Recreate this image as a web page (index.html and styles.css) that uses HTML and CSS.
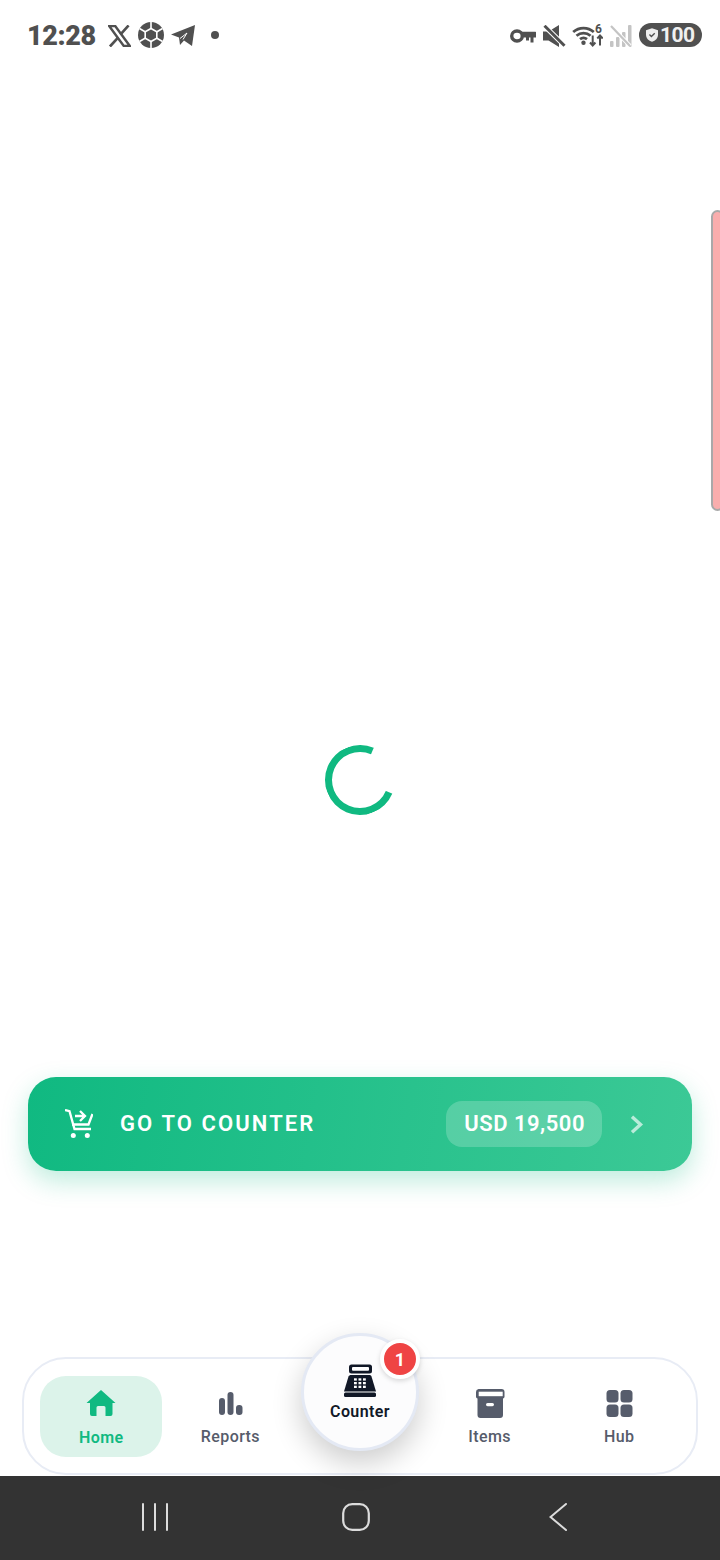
FILE: index.html
```html
<!DOCTYPE html>
<html lang="en">
<head>
<meta charset="utf-8">
<title>Home</title>
<link rel="stylesheet" href="styles.css">
</head>
<body>
<div class="app">
  <header class="status">
    <div class="status-left">
      <span class="time">12:28</span>
      <svg class="ic-x" viewBox="0 0 24 23"><path d="M1.200 1h6.300l15.300 21h-6.300z" fill="none" stroke="#505050" stroke-width="2.500"/><path d="M21.500 .5l-8.600 9.600M10.500 13.200L2 22.500" fill="none" stroke="#505050" stroke-width="2.800"/></svg>
      <svg class="ic-hex" viewBox="0 0 26 26"><circle cx="13" cy="13" r="13" fill="#505050"/><path d="M13 0v6M13 20v6M1.500 6.500l6 3.500M24.500 6.500l-6 3.500M1.500 19.500l6-3.500M24.500 19.500l-6-3.500" stroke="#fff" stroke-width="1.600"/><path d="M13 6.500l5.800 3.300v6.400L13 19.500l-5.800-3.300V9.800z" fill="#505050" stroke="#fff" stroke-width="1.600"/></svg>
      <svg class="ic-tg" viewBox="0 0 24 21"><path d="M24 0L21 21l-8-5.500-4 4.500-1-7.500L0 9.500z" fill="#505050"/><path d="M9 13.500L16 8l-4 6.500" fill="none" stroke="#fff" stroke-width="1"/></svg>
      <span class="dot"></span>
    </div>
    <div class="status-right">
      <svg class="ic-key" viewBox="0 0 26 14"><ellipse cx="7" cy="7" rx="5.300" ry="5" fill="none" stroke="#505050" stroke-width="3.400"/><path d="M12 2.800h13.500a.5.5 0 0 1 .5.500v5.200h-2.500V13.500H20.500V8.500h-1.500V11.500h-3V8.500H12z" fill="#505050"/></svg>
      <svg class="ic-mute" viewBox="0 0 23 22"><path d="M0 6.500h5.500L16 0v22L5.500 15.500H0z" fill="#505050"/><path d="M1 .5l21 20.500" stroke="#fff" stroke-width="5"/><path d="M1.500 .8l20 20" stroke="#505050" stroke-width="3"/></svg>
      <div class="wifi">
        <svg class="ic-wifi" viewBox="0 0 31 23">
          <path d="M1.200 8a15.500 15.500 0 0 1 20.600 0M4.500 11.800a10.800 10.800 0 0 1 14 0M8 15.200a5.800 5.800 0 0 1 7 0" fill="none" stroke="#505050" stroke-width="2.800"/>
          <circle cx="11.500" cy="18.800" r="2.200" fill="#505050"/>
          <path d="M20.700 11.500v10M18 18.500l2.700 3 2.700-3M28 21.500v-10M25.300 14.500l2.700-3 2.700 3" fill="none" stroke="#505050" stroke-width="2"/>
        </svg>
        <span class="wifi-six">6</span>
      </div>
      <svg class="ic-signal" viewBox="0 0 22 22"><g fill="#c4c4c4"><rect x="0" y="16" width="3.500" height="6" rx="1"/><rect x="6" y="12" width="3.500" height="10" rx="1"/><rect x="12" y="7" width="3.500" height="15" rx="1"/><rect x="18" y="0" width="3.500" height="22" rx="1"/></g><path d="M1 1l19 20" stroke="#fff" stroke-width="4"/><path d="M1 1l19 20" stroke="#c4c4c4" stroke-width="2.200"/></svg>
      <div class="battery">
        <svg class="ic-shield" viewBox="0 0 14 16"><path d="M7 0l7 2.500v5C14 12 11 14.800 7 16 3 14.800 0 12 0 7.500v-5z" fill="#eee"/><path d="M4 7.500l2.300 2.300L10.200 6" fill="none" stroke="#505050" stroke-width="1.600"/></svg>
        <span>100</span>
      </div>
    </div>
  </header>

  <main class="main">
    <div class="loader"><div class="spinner"></div></div>

    <a class="cta">
      <svg class="ic-cart" viewBox="0 0 28 30" fill="none" stroke="#fff" stroke-width="2.300">
        <path d="M0 1l4.500 1.200L9.500 20H26"/>
        <path d="M27.500 5L23.500 15.500H7"/>
        <path d="M10 7h10M15 2l5 5-5 5"/>
        <circle cx="8.300" cy="26.500" r="2.500" fill="#fff" stroke="none"/>
        <circle cx="22.300" cy="26.500" r="2.500" fill="#fff" stroke="none"/>
      </svg>
      <span class="cta-label">GO TO COUNTER</span>
      <span class="cta-amount">USD 19,500</span>
      <svg class="ic-chev" viewBox="0 0 14 19"><path d="M2 1.800l8.500 7.700L2 17.200" fill="none" stroke="#fff" stroke-opacity=".65" stroke-width="3.400"/></svg>
    </a>

    <nav class="tabbar">
      <a class="tab tab-active">
        <svg class="tab-icon" viewBox="0 0 32 32"><path d="M16 2L1.500 15H5V26a2 2 0 0 0 2 2H11.500V19.500a1.500 1.500 0 0 1 1.500-1.500h6a1.500 1.500 0 0 1 1.500 1.500V28H25.500a2 2 0 0 0 2-2V15h3z" fill="#10b981"/></svg>
        <span>Home</span>
      </a>
      <a class="tab">
        <svg class="tab-icon" viewBox="0 0 32 32"><g fill="#565c6b"><rect x="5" y="11" width="6" height="17" rx="3"/><rect x="13.500" y="5" width="6" height="23" rx="3"/><rect x="22" y="18" width="6.500" height="10" rx="3"/></g></svg>
        <span>Reports</span>
      </a>
      <div class="tab-gap"></div>
      <a class="tab">
        <svg class="tab-icon" viewBox="0 0 32 32"><path d="M4.500 2h23a3 3 0 0 1 3 3v5a2 2 0 0 1-1.500 1.500V28a3 3 0 0 1-3 3H6.500a3 3 0 0 1-3-3V11.500A2 2 0 0 1 2 10V5a3 3 0 0 1 2.500-3z" fill="#565c6b"/><rect x="4.700" y="4.700" width="24" height="4.500" fill="#fff"/><rect x="12" y="16" width="8" height="3.200" rx="1.600" fill="#fff"/></svg>
        <span>Items</span>
      </a>
      <a class="tab">
        <svg class="tab-icon" viewBox="0 0 32 32"><g fill="#565c6b"><rect x="3.500" y="3" width="12" height="12.500" rx="3.500"/><rect x="17.500" y="3" width="12" height="12.500" rx="3.500"/><rect x="3.500" y="17.500" width="12" height="12.500" rx="3.500"/><rect x="17.500" y="17.500" width="12" height="12.500" rx="3.500"/></g></svg>
        <span>Hub</span>
      </a>
      <a class="fab">
        <svg class="fab-icon" viewBox="0 0 32 33">
          <rect x="5" y="0.500" width="23" height="9" rx="2.500" fill="#111827"/>
          <rect x="8" y="3" width="17" height="3.800" rx="1" fill="#fff"/>
          <path d="M7 11h18.500c1 0 1.500.5 2 1.500L32 27.500H0l4.500-15c.5-1 1.500-1.500 2.500-1.500z" fill="#111827"/>
          <rect x="0" y="28.500" width="32" height="4.500" rx="1.500" fill="#111827"/>
          <g fill="#fff"><rect x="10" y="14.300" width="2.800" height="2.300"/><rect x="14.500" y="14.300" width="2.800" height="2.300"/><rect x="19" y="14.300" width="2.800" height="2.300"/><rect x="10" y="18" width="2.800" height="2.300"/><rect x="14.500" y="18" width="2.800" height="2.300"/><rect x="19" y="18" width="2.800" height="2.300"/><rect x="10" y="21.700" width="2.800" height="2.300"/><rect x="14.500" y="21.700" width="2.800" height="2.300"/><rect x="19" y="21.700" width="2.800" height="2.300"/></g>
        </svg>
        <span>Counter</span>
        <span class="badge">1</span>
      </a>
    </nav>
  </main>

  <div class="sysnav">
    <svg class="sys-menu" viewBox="0 0 28 28"><path d="M2 1v26M14 1v26M26 1v26" stroke="#dcdcdc" stroke-width="2" stroke-linecap="round"/></svg>
    <svg class="sys-home" viewBox="0 0 28 28"><rect x="1.200" y="1.200" width="25.600" height="25.600" rx="9" fill="none" stroke="#dcdcdc" stroke-width="2.200"/></svg>
    <svg class="sys-back" viewBox="0 0 18 28"><path d="M17 1L1.500 14 17 27" fill="none" stroke="#dcdcdc" stroke-width="2" stroke-linecap="round"/></svg>
  </div>

  <div class="sidetab"></div>
</div>
</body>
</html>
```

FILE: styles.css
```css
* { box-sizing: border-box; }
html, body { margin: 0; padding: 0; background: #fff; }
body { font-family: Roboto, "Liberation Sans", sans-serif; }

.app {
  position: relative;
  width: 720px;
  height: 1560px;
  overflow: hidden;
  display: flex;
  flex-direction: column;
  background: #fff;
}

/* status bar */
.status {
  height: 70px;
  flex: none;
  display: flex;
  justify-content: space-between;
  align-items: flex-start;
  padding: 22px 18px 0 27px;
}
.status-left, .status-right { display: flex; align-items: center; height: 26px; }
.time { font-size: 27px; font-weight: 900; color: #505050; width: 68px; line-height: 26px; padding-top: 1px; letter-spacing: -.4px; white-space: nowrap; }
.ic-x { width: 23px; height: 22px; margin-left: 13px; margin-top: 2px; }
.ic-hex { width: 26px; height: 26px; margin-left: 7px; }
.ic-tg { width: 24px; height: 21px; margin-left: 7px; margin-top: 1px; }
.dot { width: 8px; height: 8px; border-radius: 50%; background: #505050; margin-left: 16px; }

.ic-key { width: 26px; height: 14px; margin-top: 2px; }
.ic-mute { width: 23px; height: 22px; margin-left: 7px; margin-top: 2px; }
.wifi { position: relative; width: 31px; height: 23px; margin-left: 6px; }
.ic-wifi { display: block; width: 31px; height: 23px; }
.wifi-six {
  position: absolute;
  left: 23px;
  top: -1px;
  font-size: 12px;
  line-height: 12px;
  font-weight: 700;
  color: #505050;
}
.ic-signal { width: 22px; height: 22px; margin-left: 7px; margin-top: 1px; }
.battery {
  width: 63px;
  height: 24px;
  margin-left: 7px;
  border-radius: 12px;
  background: #505050;
  display: flex;
  align-items: center;
  padding-left: 7px;
  gap: 2px;
  color: #f0f0f0;
  font-size: 21px;
  font-weight: 700;
  letter-spacing: -.6px;
}
.ic-shield { width: 12px; height: 14px; flex: none; }

/* content */
.main {
  flex: 1;
  display: flex;
  flex-direction: column;
  padding: 0 22px 1px;
}
.loader {
  display: flex;
  justify-content: center;
  padding-top: 675px;
}
.spinner {
  width: 70px;
  height: 70px;
  border-radius: 50%;
  border: 7px solid #10b981;
  border-right-color: transparent;
  transform: rotate(-22deg);
}

.cta {
  margin: 262px 6px 0;
  height: 94px;
  flex: none;
  display: flex;
  align-items: center;
  padding: 0 48px 0 37px;
  border-radius: 28px;
  color: #fff;
  background: linear-gradient(100deg, #10b981 0%, #3cc996 100%);
  box-shadow: 0 10px 26px rgba(16, 185, 129, .27);
}
.ic-cart { width: 28px; height: 30px; flex: none; }
.cta-label { margin: 0 0 2px 27px; font-size: 22px; font-weight: 600; letter-spacing: 2.100px; flex: 1; white-space: nowrap; }
.cta-amount {
  height: 46px;
  padding: 0 17px 1px 18px;
  display: flex;
  align-items: center;
  border-radius: 16px;
  background: rgba(255, 255, 255, .2);
  font-size: 22px;
  font-weight: 600;
  letter-spacing: .5px;
  white-space: nowrap;
}
.ic-chev { width: 14px; height: 19px; margin-left: 28px; flex: none; }

/* tab bar */
.tabbar {
  position: relative;
  margin-top: auto;
  height: 118px;
  flex: none;
  display: grid;
  grid-template-columns: repeat(5, 1fr);
  align-items: center;
  padding: 0 12px;
  background: #fff;
  border: 2px solid #e8ecf5;
  border-radius: 44px;
}
.tab {
  height: 81px;
  margin: 0 4px;
  display: flex;
  flex-direction: column;
  align-items: center;
  justify-content: center;
  gap: 8px;
  border-radius: 26px;
  color: #565c6b;
  font-size: 16px;
  font-weight: 500;
  letter-spacing: .4px;
}
.tab-active { background: #dcf3ea; color: #10b981; font-weight: 600; padding: 3px 0 0 1px; }
.tab-icon { width: 32px; height: 32px; }
.fab {
  position: absolute;
  left: 277px;
  top: -26px;
  width: 118px;
  height: 118px;
  border-radius: 50%;
  border: 3px solid #e4e9f4;
  background: #fcfcfd;
  box-shadow: 0 12px 30px rgba(0, 0, 0, .2);
  display: flex;
  flex-direction: column;
  align-items: center;
  color: #111827;
  font-size: 16px;
  font-weight: 600;
  letter-spacing: .4px;
  padding-top: 28px;
}
.fab-icon { width: 32px; height: 33px; margin-bottom: 5px; }
.badge {
  position: absolute;
  left: 76px;
  top: 3px;
  width: 40px;
  height: 40px;
  border-radius: 50%;
  border: 4px solid #fff;
  background: #ef4444;
  color: #fff;
  font-size: 18px;
  font-weight: 700;
  display: flex;
  align-items: center;
  justify-content: center;
  letter-spacing: 0;
  box-shadow: 0 2px 5px rgba(0, 0, 0, .15);
}

/* system navigation */
.sysnav {
  height: 84px;
  flex: none;
  background: #333;
  display: flex;
  align-items: flex-start;
  padding: 27px 0 0 141px;
}
.sysnav svg { flex: none; height: 28px; }
.sys-menu { width: 28px; }
.sys-home { width: 28px; margin-left: 173px; }
.sys-back { width: 18px; margin-left: 179px; }

/* floating side tab */
.sidetab {
  position: absolute;
  right: -4px;
  top: 210px;
  width: 13px;
  height: 301px;
  border: 2px solid #a9a9a9;
  border-radius: 8px;
  background: #f9adad;
}
```
